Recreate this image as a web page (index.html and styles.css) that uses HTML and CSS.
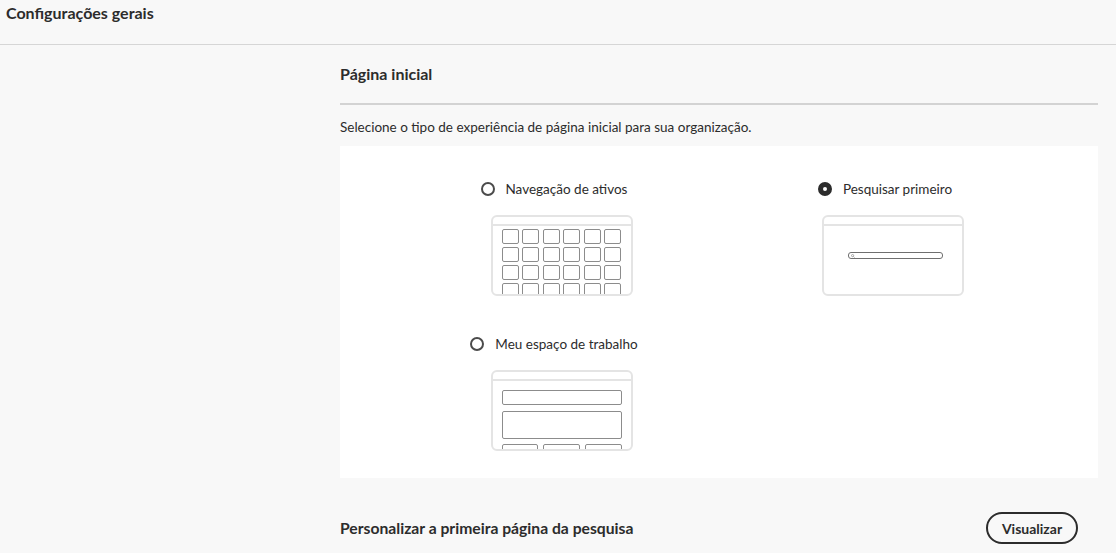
FILE: index.html
```html
<!DOCTYPE html>
<html lang="pt-BR">
<head>
<meta charset="utf-8">
<title>Configurações gerais</title>
<link rel="stylesheet" href="styles.css">
</head>
<body>
<header class="topbar">
  <h1 class="topbar-title">Configurações gerais</h1>
</header>
<main class="content">
  <section class="section">
    <h2 class="section-title">Página inicial</h2>
    <p class="section-desc">Selecione o tipo de experiência de página inicial para sua organização.</p>
    <div class="card">
      <div class="option">
        <label class="option-label"><span class="radio"></span>Navegação de ativos</label>
        <div class="preview">
          <div class="preview-head"></div>
          <div class="tiles">
            <span></span><span></span><span></span><span></span><span></span><span></span>
            <span></span><span></span><span></span><span></span><span></span><span></span>
            <span></span><span></span><span></span><span></span><span></span><span></span>
            <span></span><span></span><span></span><span></span><span></span><span></span>
          </div>
        </div>
      </div>
      <div class="option">
        <label class="option-label"><span class="radio radio-on"></span>Pesquisar primeiro</label>
        <div class="preview">
          <div class="preview-head"></div>
          <div class="search-body">
            <div class="search-bar">
              <svg class="search-icon" width="4" height="4" viewBox="0 0 4 4"><circle cx="1.6" cy="1.6" r="1.1" fill="none" stroke="#888" stroke-width="0.7"/><path d="M2.4 2.4 L3.6 3.6" stroke="#888" stroke-width="0.7"/></svg>
            </div>
          </div>
        </div>
      </div>
      <div class="option">
        <label class="option-label"><span class="radio"></span>Meu espaço de trabalho</label>
        <div class="preview">
          <div class="preview-head"></div>
          <div class="workspace">
            <div class="ws-bar"></div>
            <div class="ws-panel"></div>
            <div class="ws-row"><span></span><span></span><span></span></div>
          </div>
        </div>
      </div>
    </div>
  </section>
  <section class="section-footer">
    <h2 class="footer-title">Personalizar a primeira página da pesquisa</h2>
    <button class="btn" type="button">Visualizar</button>
  </section>
</main>
</body>
</html>
```

FILE: styles.css
```css
* { box-sizing: border-box; }
html, body { margin: 0; padding: 0; }
body {
  background: #f8f8f8;
  color: #2c2c2c;
  font-family: Lato, "Noto Sans", sans-serif;
  width: 1116px;
  height: 553px;
  overflow: hidden;
}
.topbar {
  height: 45px;
  border-bottom: 1px solid #d6d6d6;
  padding: 3px 6px 0;
}
.topbar-title {
  margin: 0;
  font-size: 16px;
  font-weight: 700;
  line-height: 20px;
}
.content {
  padding: 0 18px 0 340px;
}
.section-title {
  margin: 0;
  padding-top: 19px;
  font-size: 16px;
  font-weight: 700;
  line-height: 20px;
  padding-bottom: 19px;
  border-bottom: 2px solid #d3d3d3;
}
.section-desc {
  margin: 0;
  padding: 12px 0 0;
  font-size: 13.5px;
  line-height: 20px;
  height: 41px;
}
.card {
  background: #fff;
  height: 332px;
  padding: 33px 0 0 16px;
  display: grid;
  grid-template-columns: 331px 331px;
  justify-content: center;
  row-gap: 38px;
  align-content: start;
}
.option {
  display: flex;
  flex-direction: column;
  align-items: center;
  gap: 16px;
}
.option-label {
  display: flex;
  align-items: center;
  gap: 11px;
  font-size: 13.5px;
  line-height: 20px;
  padding-right: 15px;
}
.radio {
  width: 14px;
  height: 14px;
  border-radius: 50%;
  border: 2px solid #4b4b4b;
  background: #fff;
  flex: none;
}
.radio-on {
  border: 5px solid #2c2c2c;
}
.preview {
  width: 142px;
  height: 81px;
  border: 2px solid #e4e4e4;
  border-radius: 6px;
  background: #fff;
  overflow: hidden;
}
.preview-head {
  height: 9px;
  border-bottom: 2px solid #e4e4e4;
}
.tiles {
  display: grid;
  grid-template-columns: repeat(6, 17px);
  grid-auto-rows: 15px;
  column-gap: 3.6px;
  row-gap: 3px;
  padding: 3px 0 0 9px;
}
.tiles span {
  border: 1px solid #8c8c8c;
  border-radius: 2px;
}
.search-body {
  display: flex;
  justify-content: center;
  padding: 26px 0 0 6px;
}
.search-bar {
  width: 95px;
  height: 7px;
  border: 1px solid #6f6f6f;
  border-radius: 3px;
  display: flex;
  align-items: center;
  padding-left: 2px;
}
.search-icon { display: block; }
.workspace {
  padding: 9px 9px 0 9px;
  display: flex;
  flex-direction: column;
  gap: 6px;
}
.ws-bar {
  height: 15px;
  border: 1px solid #8c8c8c;
  border-radius: 2px;
}
.ws-panel {
  height: 28px;
  border: 1px solid #8c8c8c;
  border-radius: 2px;
}
.ws-row {
  display: flex;
  gap: 5px;
  margin-top: -1px;
}
.ws-row span {
  flex: 1;
  height: 15px;
  border: 1px solid #8c8c8c;
  border-radius: 2px;
}
.section-footer {
  display: flex;
  align-items: center;
  justify-content: space-between;
  padding: 34px 20px 0 0;
}
.footer-title {
  margin: 0;
  font-size: 15.7px;
  font-weight: 700;
  line-height: 20px;
}
.btn {
  font-family: inherit;
  font-size: 14px;
  font-weight: 700;
  color: #2c2c2c;
  background: transparent;
  border: 2px solid #2c2c2c;
  border-radius: 16px;
  height: 32px;
  width: 92px;
  padding: 0;
}
```
